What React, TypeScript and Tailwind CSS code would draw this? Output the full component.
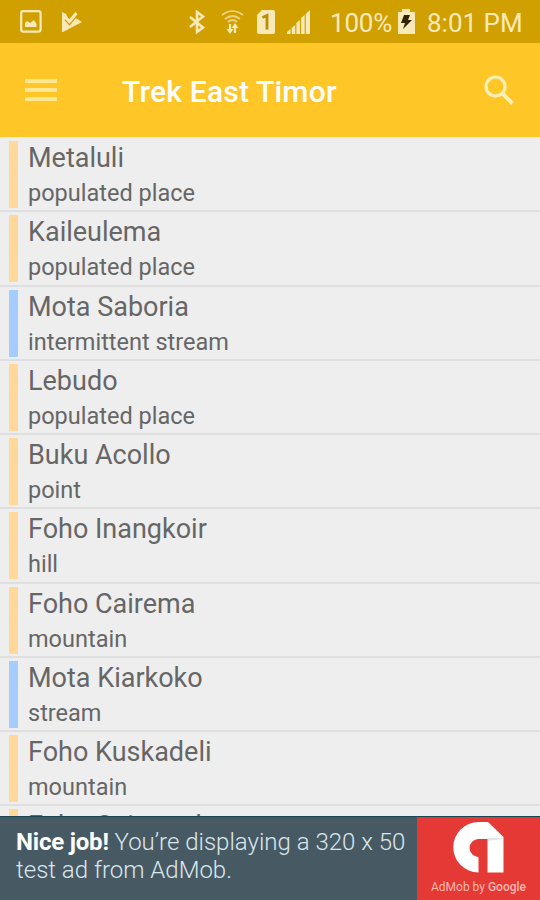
import React from 'react';

type Place = { name: string; kind: string; water?: boolean };

const places: Place[] = [
  { name: 'Metaluli', kind: 'populated place' },
  { name: 'Kaileulema', kind: 'populated place' },
  { name: 'Mota Saboria', kind: 'intermittent stream', water: true },
  { name: 'Lebudo', kind: 'populated place' },
  { name: 'Buku Acollo', kind: 'point' },
  { name: 'Foho Inangkoir', kind: 'hill' },
  { name: 'Foho Cairema', kind: 'mountain' },
  { name: 'Mota Kiarkoko', kind: 'stream', water: true },
  { name: 'Foho Kuskadeli', kind: 'mountain' },
  { name: 'Foho Cairesoda', kind: '' },
];

const StatusBar: React.FC = () => (
  <div className="flex h-[43px] shrink-0 items-center bg-[#d0a000] text-[#f9e9b8]">
    <svg className="ml-5 h-[23px] w-[22px]" viewBox="0 0 22 23" fill="none">
      <rect x="1.2" y="1.2" width="19.4" height="20.4" rx="2" stroke="currentColor" strokeWidth="2.2" />
      <path d="M5 17v-4l2-2 3 2 4-3 2.500 4v3z" fill="currentColor" />
    </svg>
    <svg className="ml-5 h-[22px] w-5" viewBox="0 0 20 22">
      <path d="M0 1l4 2 3 6 5-3 8 5L1 21H0z" fill="currentColor" />
      <path d="M3 8.500l4.500 5L15.500 4" fill="none" stroke="#d0a000" strokeWidth="1.5" />
      <path d="M3.500 6.500l4 4L14.500 2" fill="none" stroke="currentColor" strokeWidth="3" />
    </svg>
    <svg className="ml-[106px] h-6 w-[18px]" viewBox="0 0 18 24" fill="none" stroke="currentColor" strokeWidth="2.6">
      <path d="M2 7l13 10.500-6 4.500V2l6 4.500L2 17" />
    </svg>
    <svg className="ml-[15px] h-[26px] w-[23px]" viewBox="0 0 23 26" fill="none" stroke="currentColor">
      <path d="M1 6Q11.500-2 22 6M4 10Q11.500 4 19 10M7 13Q11.500 9 16 13" strokeWidth="1.7" opacity=".7" />
      <path d="M9 15v8M14 24v-8" strokeWidth="2.2" />
      <path d="M5.500 20h7L9 25zM10.500 19h7L14 14z" fill="currentColor" stroke="none" />
    </svg>
    <svg className="ml-[13px] h-6 w-[18px]" viewBox="0 0 18 24">
      <path d="M5 0h11q2 0 2 2v20q0 2-2 2H2q-2 0-2-2V5z" fill="currentColor" />
      <path d="M5.500 7.500l4.500-2v14" fill="none" stroke="#b98e00" strokeWidth="2.8" />
    </svg>
    <svg className="ml-3 h-6 w-[23px]" viewBox="0 0 23 24" fill="currentColor">
      <path d="M0 24v-2l3.500-3v5zM4.700 24v-6l3.500-3v9zM9.400 24V13l3.500-3v14zM14.100 24V8l3.500-3v19zM18.800 24V4L23 0v24z" />
    </svg>
    <span className="ml-5 w-[67px] pt-1 whitespace-nowrap text-[26px] leading-[39px] tracking-[-0.2px]">100%</span>
    <svg className="h-[25px] w-[18px]" viewBox="0 0 18 25">
      <path d="M5 0h8v3h5v22H1V3h4z" fill="currentColor" />
      <path d="M7 6h6l-2 5h4L6 20l2-6H4z" fill="#302400" />
    </svg>
    <span className="ml-3 pt-1 whitespace-nowrap text-[26px] leading-[39px]">8:01 PM</span>
  </div>
);

const Toolbar: React.FC = () => (
  <header className="flex h-[94px] shrink-0 items-center bg-[#ffc627]">
    <div className="ml-[25px] flex w-8 flex-col gap-[5px]">
      <i className="h-1 bg-[#ffe693]" />
      <i className="h-1 bg-[#ffe693]" />
      <i className="h-1 bg-[#ffe693]" />
    </div>
    <h1 className="ml-[65px] pt-0.5 text-[30px] font-medium whitespace-nowrap text-white tracking-[0.2px]">Trek East Timor</h1>
    <svg className="mr-[26px] ml-auto h-[30px] w-[30px]" viewBox="0 0 30 30" fill="none" stroke="#fff0b5">
      <circle cx="11.5" cy="11.5" r="9.500" strokeWidth="3.2" />
      <path d="M18.500 18.500l10 10" strokeWidth="4" />
    </svg>
  </header>
);

const PlaceRow: React.FC<{ place: Place }> = ({ place }) => (
  <li className="flex h-[74.25px] shrink-0 border-b-2 border-[#dfdfdf] pt-[3px] pl-[9px]">
    <div className={`h-[67px] w-[9px] shrink-0 ${place.water ? 'bg-[#a5ccff]' : 'bg-[#ffd89a]'}`} />
    <div className="ml-[10px] whitespace-nowrap text-[#666]">
      <p className="text-[27px] leading-[34px]">{place.name}</p>
      {place.kind && <p className="pt-px text-[23.5px] leading-[35px]">{place.kind}</p>}
    </div>
  </li>
);

const AdBanner: React.FC = () => (
  <footer className="flex h-[84px] shrink-0 border-t border-[#174550] bg-[#475a64]">
    <div className="w-[417px] pt-[11px] pl-4 text-[24px] leading-[28px] font-light whitespace-nowrap text-[#dbe6ed]">
      <p>
        <b className="font-bold tracking-[-0.2px] text-white">Nice job!</b> You’re displaying a 320 x 50
      </p>
      <p>test ad from AdMob.</p>
    </div>
    <div className="flex flex-1 flex-col items-center bg-[#e53935] pt-[5px]">
      <svg className="h-[51px] w-[51px]" viewBox="0 0 51 51">
        <path d="M25.500 50.500A25 25 0 0 1 25.500 0H35l15.500 15v35.500h-16V17h-9a9 9 0 0 0 0 18z" fill="#fff" />
        <path d="M35 16h15v1l-15 2z" fill="#e5e5e5" />
      </svg>
      <p className="mt-1.5 text-[12px] leading-4 whitespace-nowrap text-[#ffb6ae]">
        AdMob by <span className="font-medium">Google</span>
      </p>
    </div>
  </footer>
);

const App: React.FC = () => (
  <div className="flex h-[900px] w-[540px] flex-col overflow-hidden bg-[#eee] font-['Roboto',sans-serif]">
    <StatusBar />
    <Toolbar />
    <ul className="flex min-h-0 flex-1 flex-col overflow-hidden pt-px">
      {places.map((place) => (
        <PlaceRow key={place.name} place={place} />
      ))}
    </ul>
    <AdBanner />
  </div>
);

export default App;
